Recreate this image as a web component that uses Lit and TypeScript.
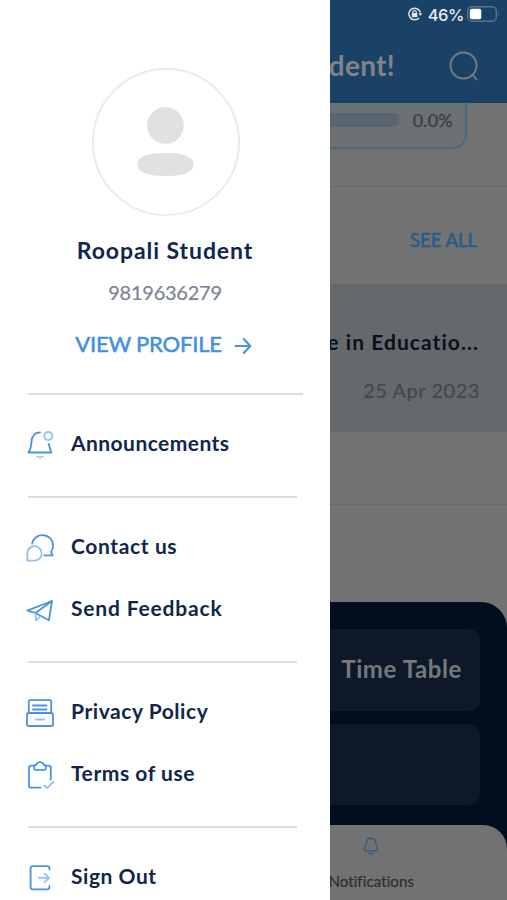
import { LitElement, html, css, svg } from "lit";
import { customElement } from "lit/decorators.js";

const icons = {
  bell: svg`
    <path d="M14 1.4C7.5 1.8 5.6 6.2 5.4 11.2C5.3 15.6 4.6 18.6 2.4 21.5H25.2L22.6 12.8" />
    <path class="soft" d="M11.4 25.4Q14 27.8 16.6 25.4" />
    <circle class="soft" cx="22.3" cy="5" r="4" />`,
  chat: svg`
    <path d="M6.2 9.6C7 4.500 11.400 1.200 16.400 1.200C22.500 1.200 27 5.700 27 11.500C27 14 26.200 16.200 25 17.900L26.600 21.400H18.200" />
    <path class="soft" d="M8.600 12.200A7.100 7.100 0 1 1 8.300 26.600H1.300V19.300A7.200 7.200 0 0 1 8.600 12.200Z" />`,
  plane: svg`
    <path d="M1.300 14.600L26 5L22.900 24.300L9.500 17Z" />
    <path d="M9.500 17L26 5" />
    <path class="soft" d="M9.700 18L10 24.300L14.300 20.400" />`,
  archive: svg`
    <rect x="1" y="14" width="26" height="13" rx="1.600" />
    <path d="M2.800 14V2.800Q2.800 1.200 4.400 1.200H23.600Q25.200 1.200 25.200 2.800V14" />
    <path d="M7 6.500H20.500M7 10.500H20.500" />
    <path class="soft" d="M9.800 20.500H18.200" />`,
  clipboard: svg`
    <path d="M8 4.600H5Q3 4.600 3 6.600V24.700Q3 26.700 5 26.700H14.500M20 4.600H22.800Q24.800 4.600 24.800 6.600V18.500" />
    <path d="M8.200 7.800V5.800Q8.200 4 10.400 3.800C11.200 .3 16.800 .3 17.600 3.800Q19.800 4 19.800 5.800V7.800Q19.800 8.800 18.600 8.800H9.400Q8.200 8.800 8.200 7.800Z" />
    <path class="soft" d="M18.300 24.500L21.200 27.200L27.500 20.600" />`,
  exit: svg`
    <path d="M23.400 5.600V4.200Q23.400 2.200 21.400 2.200H6.600Q4.600 2.200 4.600 4.200V23.300Q4.600 25.300 6.600 25.300H21.400Q23.400 25.300 23.400 23.300V21.900" />
    <path class="soft" d="M12.800 13.800H22.800M18.600 9.400L23 13.800L18.600 18.200" />`,
};

type Item = { icon: keyof typeof icons; label: string; spacing: number };

const sections: Item[][] = [
  [{ icon: "bell", label: "Announcements", spacing: 0.45 }],
  [
    { icon: "chat", label: "Contact us", spacing: 0.62 },
    { icon: "plane", label: "Send Feedback", spacing: 0.83 },
  ],
  [
    { icon: "archive", label: "Privacy Policy", spacing: 0.55 },
    { icon: "clipboard", label: "Terms of use", spacing: 0.55 },
  ],
  [{ icon: "exit", label: "Sign Out", spacing: 0.55 }],
];

@customElement("side-drawer")
export class SideDrawer extends LitElement {
  static styles = css`
    :host { display: block; box-sizing: border-box; width: 330px; height: 900px; padding-top: 68px; overflow: hidden; background: #fff; color: #10264b; }
    .profile { display: flex; flex-direction: column; align-items: center; height: 325px; }
    .avatar { display: block; width: 148px; height: 148px; margin-left: 1px; }
    .name { margin-top: 19px; font-size: 23px; line-height: 30px; font-weight: 700; letter-spacing: 0.93px; }
    .phone { margin-top: 13px; font-size: 20px; line-height: 28px; color: #7c8398; letter-spacing: -0.25px; -webkit-text-stroke: 0.2px; }
    .view { display: flex; align-items: center; gap: 12px; margin-top: 23px; margin-left: -3px; font-size: 22px; line-height: 30px; letter-spacing: -0.2px; color: #4490df; -webkit-text-stroke: 0.55px; }
    .arrow { width: 18px; height: 18px; margin-top: 4px; }
    .section { margin: 0 33px 0 28px; padding: 18px 0 21px; border-top: 2px solid #dcdddd; }
    .section:first-of-type { margin-right: 27px; }
    .item { display: flex; align-items: center; gap: 17px; height: 62px; margin-left: -2px; font-size: 21px; font-weight: 700; white-space: nowrap; }
    .label { line-height: 28px; margin-top: -2px; }
    .icon { width: 28px; height: 28px; margin-top: 1px; }
    svg { flex: none; fill: none; stroke: #4a94de; stroke-width: 1.8; stroke-linecap: round; stroke-linejoin: round; }
    .soft { stroke: #8fc3f1; }
    .arrow { stroke-width: 2.1; }
  `;
  render() {
    return html`
      <header class="profile">
        <svg class="avatar" viewBox="0 0 148 148">
          <circle cx="74" cy="74" r="73" stroke="#ebebeb" stroke-width="2" />
          <circle cx="73.500" cy="57.500" r="18.300" fill="#e1e1e1" stroke="none" />
          <path d="M45.500 96.500C45.500 88 57 85 73.500 85S101.500 88 101.500 96.500S90 108 73.500 108S45.500 105 45.500 96.500Z" fill="#e1e1e1" stroke="none" />
        </svg>
        <div class="name">Roopali Student</div>
        <div class="phone">9819636279</div>
        <div class="view">
          <span>VIEW PROFILE</span>
          <svg class="arrow" viewBox="0 0 18 18"><path d="M1.500 9H16M9.800 2L16.300 9L9.800 16" /></svg>
        </div>
      </header>
      ${sections.map(
        (items) => html`<div class="section">
          ${items.map(
            (it) => html`<div class="item">
              <svg class="icon" viewBox="0 0 28 28">${icons[it.icon]}</svg>
              <span class="label" style="letter-spacing:${it.spacing}px">${it.label}</span>
            </div>`
          )}
        </div>`
      )}
    `;
  }
}

@customElement("home-screen")
export class HomeScreen extends LitElement {
  static styles = css`
    :host { display: flex; flex-direction: column; width: 507px; height: 900px; overflow: hidden; background: #727272; white-space: nowrap; }
    * { box-sizing: border-box; }
    svg { fill: none; flex: none; }
    .top { height: 103px; background: #1a4166; }
    .status { display: flex; justify-content: flex-end; align-items: center; height: 28px; padding-right: 7px; color: #e6edf2; font: 500 16.500px Inter, sans-serif; letter-spacing: -0.45px; }
    .status span { margin: 1px 3px 0 5px; }
    .bar { display: flex; justify-content: flex-end; align-items: center; height: 75px; padding-right: 28px; color: #808487; font-size: 28px; line-height: 36px; font-weight: 700; letter-spacing: 0.3px; }
    .title { margin: 0 54px 2px 0; }
    .search { margin-bottom: 0; }
    .progress { height: 84px; border-bottom: 1px solid #676767; }
    .card { display: flex; justify-content: flex-end; gap: 14px; width: 451px; height: 46px; margin-left: 16px; padding: 0 12px 0 0; border: 2px solid #456a84; border-top: 0; border-radius: 0 0 14px 14px; background: #6c7173; color: #3b4045; font-size: 18px; line-height: 34px; letter-spacing: 0.2px; -webkit-text-stroke: 0.4px; }
    .track { width: 320px; height: 14px; margin-top: 10px; border-radius: 5px; background: #596670; }
    .see { height: 97px; padding: 41px 30px 0 0; text-align: right; color: #285b8a; font-size: 18.500px; line-height: 24px; -webkit-text-stroke: 0.5px; }
    .notice { height: 148px; padding: 43px 27px 0 0; background: #66696b; text-align: right; }
    .headline { padding-right: 1px; font-size: 21px; line-height: 30px; font-weight: 700; letter-spacing: 1.050px; color: #080f1e; }
    .date { margin-top: 19px; font-size: 20px; line-height: 28px; letter-spacing: 0.55px; color: #44474b; -webkit-text-stroke: 0.2px; }
    .gap { height: 170px; padding-top: 72px; }
    .rule { height: 1px; background: #686868; }
    .panel { height: 223px; padding: 27px 27px 0 27px; border-radius: 0 26px 0 0; background: #000e1d; }
    .tile { display: flex; justify-content: flex-end; align-items: center; height: 82px; margin-bottom: 13px; padding: 0 18px 3px 0; border-radius: 11px; background: #0d1928; color: #75797e; font-size: 24px; font-weight: 700; letter-spacing: 0.6px; }
    .tile + .tile { height: 81px; }
    .dock { background: #000e1d; }
    .tabs { display: flex; justify-content: flex-end; height: 75px; padding: 12px 93px 0 0; border-radius: 0 24px 0 0; background: #727272; color: #2c2e30; font-size: 15px; }
    .tab { display: flex; flex-direction: column; align-items: center; gap: 16px; line-height: 20px; letter-spacing: 0.1px; -webkit-text-stroke: 0.2px; }
    .tab svg { width: 16px; height: 18px; margin-right: 1px; }
  `;
  render() {
    return html`
      <div class="top">
        <div class="status">
          <svg width="16" height="16" viewBox="0 0 16 16" stroke="#dce5eb" stroke-width="1.500">
            <path d="M12 11.900A5.800 5.800 0 1 1 13.300 6.500" />
            <path d="M11.500 7.300H15.300L13.400 10.100Z" fill="#dce5eb" stroke="none" />
            <rect x="4.800" y="7" width="5.600" height="4.300" rx=".6" fill="#dce5eb" stroke="none" />
            <path d="M5.900 7.500V6Q5.900 4.600 7.600 4.600T9.300 6V7.500" stroke-width="1.200" />
          </svg>
          <span>46%</span>
          <svg width="33" height="16" viewBox="0 0 33 16">
            <rect x=".8" y=".8" width="28.500" height="14.400" rx="4" stroke="#55758f" stroke-width="1.400" />
            <rect x="2.800" y="2.800" width="11.500" height="10.400" rx="2" fill="#fff" />
            <path d="M31 5.500Q32.700 8 31 10.500Z" fill="#55758f" />
          </svg>
        </div>
        <div class="bar">
          <span class="title">Hi, Student!</span>
          <svg class="search" width="30" height="30" viewBox="0 0 30 30" stroke="#77797a" stroke-width="2">
            <circle cx="14.500" cy="14.500" r="13" /><path d="M23.700 23.700L27.500 28.500" stroke-linecap="round" />
          </svg>
        </div>
      </div>
      <div class="progress">
        <div class="card"><div class="track"></div><span>0.0%</span></div>
      </div>
      <div class="see">SEE ALL</div>
      <div class="notice">
        <div class="headline">e in Educatio...</div>
        <div class="date">25 Apr 2023</div>
      </div>
      <div class="gap"><div class="rule"></div></div>
      <div class="panel"><div class="tile">Time Table</div><div class="tile"></div></div>
      <div class="dock">
        <div class="tabs">
          <div class="tab">
            <svg viewBox="0 0 16 18" stroke="#315d85" stroke-width="1.400" stroke-linejoin="round">
              <path d="M8 1.200C4.800 1.200 3.300 3.600 3.200 6.300C3.100 8.700 1.300 10 1.300 12C1.300 13.600 2.600 14 4 14H12C13.400 14 14.700 13.600 14.700 12C14.700 10 12.900 8.700 12.800 6.300C12.700 3.600 11.200 1.200 8 1.200Z" />
              <path d="M5.500 16.700H10.500" />
            </svg>
            <span>Notifications</span>
          </div>
        </div>
      </div>
    `;
  }
}

@customElement("app-root")
export class AppRoot extends LitElement {
  static styles = css`
    :host { display: block; position: relative; width: 507px; height: 900px; overflow: hidden; font-family: Lato, sans-serif; }
    .drawer { position: absolute; top: 0; left: 0; }
  `;
  render() {
    return html`<home-screen></home-screen><side-drawer class="drawer"></side-drawer>`;
  }
}
